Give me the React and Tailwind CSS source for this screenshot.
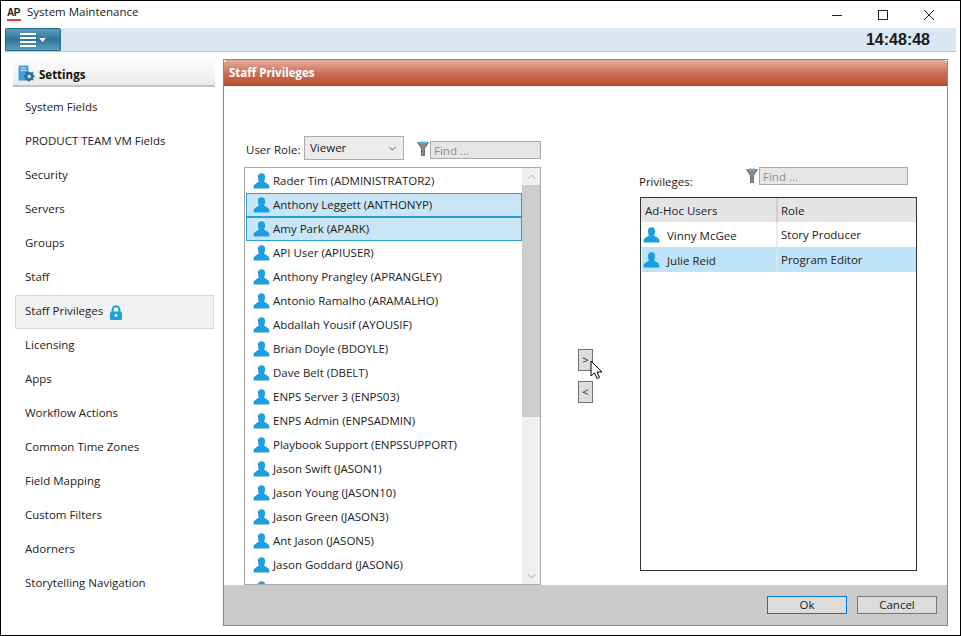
const FONT = "font-['Open_Sans','Noto_Sans',sans-serif]";

const SETTINGS_ITEMS = [
  'System Fields',
  'PRODUCT TEAM VM Fields',
  'Security',
  'Servers',
  'Groups',
  'Staff',
  'Staff Privileges',
  'Licensing',
  'Apps',
  'Workflow Actions',
  'Common Time Zones',
  'Field Mapping',
  'Custom Filters',
  'Adorners',
  'Storytelling Navigation',
];

const USERS = [
  'Rader Tim (ADMINISTRATOR2)',
  'Anthony Leggett (ANTHONYP)',
  'Amy Park (APARK)',
  'API User (APIUSER)',
  'Anthony Prangley (APRANGLEY)',
  'Antonio Ramalho (ARAMALHO)',
  'Abdallah Yousif (AYOUSIF)',
  'Brian Doyle (BDOYLE)',
  'Dave Belt (DBELT)',
  'ENPS Server 3 (ENPS03)',
  'ENPS Admin (ENPSADMIN)',
  'Playbook Support (ENPSSUPPORT)',
  'Jason Swift (JASON1)',
  'Jason Young (JASON10)',
  'Jason Green (JASON3)',
  'Ant Jason (JASON5)',
  'Jason Goddard (JASON6)',
  '',
];

function Person() {
  return (
    <svg width="17" height="16" viewBox="0 0 17 16" className="shrink-0">
      <ellipse cx="8.5" cy="4.6" rx="3.6" ry="4.4" fill="#1b9fe0" />
      <path d="M6.2 8 C5 9.8 1.2 10.2 0.6 13.4 L0.6 15.6 L16.4 15.6 L16.4 13.4 C15.8 10.2 12 9.8 10.8 8 Z" fill="#1b9fe0" />
    </svg>
  );
}

function Funnel() {
  return (
    <svg width="12" height="16" viewBox="0 0 12 16" className="shrink-0">
      <path d="M0.5 1.5 L11.5 1.5 L7.5 7.5 L7.5 14.5 L4.5 14.5 L4.5 7.5 Z" fill="#8a8a8a" stroke="#555" strokeWidth="0.8" />
      <path d="M0.8 1.5 C3 0 9 0 11.2 1.5 C9 3 3 3 0.8 1.5 Z" fill="#58b4e6" />
    </svg>
  );
}

function FindBox({ className }) {
  return (
    <div className={`h-[18px] bg-[#e6e6e6] border border-[#a8a8a8] px-[3px] text-[11.5px] leading-[17px] text-[#8f8f8f] ${className}`}>Find ...</div>
  );
}

function WindowTitle() {
  return (
    <div className="h-[27px] flex items-start shrink-0">
      <div className="w-[14px] ml-[6px] mt-[6px] flex flex-col gap-[1px]">
        <span className="font-['Liberation_Sans',sans-serif] font-bold text-[10px] leading-[11px] text-[#222] tracking-[-0.5px]">AP</span>
        <span className="h-[2px] bg-[#ee3a3a] w-[14px]"></span>
      </div>
      <span className="ml-[6px] mt-[3px] text-[11.5px] leading-[16px] text-[#1a1a1a]">System Maintenance</span>
      <div className="ml-auto mr-[8px] h-full flex items-center text-black">
        <svg width="46" height="16" viewBox="0 0 46 16"><path d="M18 8.5 H28" stroke="#222" strokeWidth="1" /></svg>
        <svg width="46" height="16" viewBox="0 0 46 16"><rect x="18.5" y="3.5" width="9" height="9" fill="none" stroke="#222" strokeWidth="1" /></svg>
        <svg width="46" height="16" viewBox="0 0 46 16"><path d="M18 3 L28 13 M28 3 L18 13" stroke="#222" strokeWidth="1" /></svg>
      </div>
    </div>
  );
}

function MenuBar() {
  return (
    <div className="h-[24px] shrink-0 flex items-stretch bg-[#dde7f3] border-b border-[#b7c8dc] ml-[4px] mr-[4px]">
      <div className="w-[56px] h-[23px] rounded-t-[2px] border border-[#1f6f93] bg-gradient-to-b from-[#5f9dbb] via-[#2c7699] to-[#5d9cb9] flex items-center justify-center gap-[3px]">
        <div className="flex flex-col gap-[2px]">
          <span className="block w-[16px] h-[2px] bg-white"></span>
          <span className="block w-[16px] h-[2px] bg-white"></span>
          <span className="block w-[16px] h-[2px] bg-white"></span>
          <span className="block w-[16px] h-[2px] bg-white"></span>
        </div>
        <svg width="7" height="4" viewBox="0 0 7 4"><path d="M0 0 H7 L3.5 4 Z" fill="#fff" /></svg>
      </div>
      <span className="ml-auto mr-[26px] font-['Liberation_Sans',sans-serif] font-bold text-[16px] leading-[24px] text-[#1a1a1a]">14:48:48</span>
    </div>
  );
}

function Sidebar() {
  return (
    <div className="w-[222px] shrink-0 pl-[12px] pt-[7px]">
      <div className="w-[202px] h-[28px] flex items-start border-b-2 border-[#c4c4bc] bg-gradient-to-b from-white to-[#e9e9e9]">
        <svg width="17" height="17" viewBox="0 0 17 17" className="ml-[5px] mt-[6px]">
          <rect x="0.5" y="0.5" width="10" height="15" rx="1" fill="#3f9fdc" />
          <path d="M2.5 3 H8.5 M2.5 5.5 H8.5" stroke="#d5ecfa" strokeWidth="1" />
          <path d="M11.5 6.8 L13 7.4 L14.4 6.8 L15.6 8 L15 9.4 L16.5 10.8 L16.5 12.2 L15 12.8 L15.6 14.4 L14.4 15.6 L13 15 L11.5 16.5 L10 16.5 L9.4 15 L8 15.6 L6.8 14.4 L7.4 12.8 L6 12.2 L6 10.8 L7.4 9.4 L6.8 8 L8 6.8 L9.4 7.4 L10 6.8 Z" fill="#2d6f9a" />
          <circle cx="11.2" cy="11.5" r="1.7" fill="#d8e8f2" />
        </svg>
        <span className="ml-[4px] mt-[7px] text-[11.5px] font-bold text-[#111]">Settings</span>
      </div>
      <div className="mt-[4px] w-[199px] ml-[2px]">
        {SETTINGS_ITEMS.map((item) => (
          <div
            key={item}
            className={`h-[34px] flex items-center pb-[2px] text-[11.5px] text-[#222] ${item === 'Staff Privileges' ? 'bg-[#f2f2f2] border border-[#d9d9d9] pl-[9px]' : 'pl-[10px]'}`}
          >
            {item}
            {item === 'Staff Privileges' && (
              <svg width="14" height="15" viewBox="0 0 14 15" className="ml-[6px] mt-[2px]">
                <path d="M3.6 7 V4.6 a3.4 3.4 0 0 1 6.8 0 V7" fill="none" stroke="#1b9fe0" strokeWidth="2" />
                <rect x="1" y="6.5" width="12" height="8.5" rx="1.5" fill="#1b9fe0" />
                <circle cx="7" cy="10.5" r="1.4" fill="#fff" />
              </svg>
            )}
          </div>
        ))}
      </div>
    </div>
  );
}

function UserList() {
  return (
    <div className="h-[418px] w-[297px] border border-[#a9a9a9] bg-white flex overflow-hidden">
      <div className="w-[277px] pl-px pt-[1px] overflow-hidden">
        {USERS.map((name, i) => {
          const selected = i === 1 || i === 2;
          return (
            <div
              key={i}
              className={`h-[24px] flex items-center text-[11.5px] text-[#222] ${selected ? 'bg-[#c8e6f5] border border-[#26a0da] pl-[6px]' : 'pl-[7px]'}`}
            >
              <Person />
              <span className="ml-[3px]">{name}</span>
            </div>
          );
        })}
      </div>
      <div className="w-[18px] bg-[#f0f0f0] flex flex-col">
        <div className="h-[17px] flex items-center justify-center">
          <svg width="9" height="6" viewBox="0 0 9 6"><path d="M0.5 5 L4.5 1 L8.5 5" fill="none" stroke="#b0b0b0" strokeWidth="1" /></svg>
        </div>
        <div className="h-[232px] bg-[#cdcdcd]"></div>
        <div className="flex-1"></div>
        <div className="h-[17px] flex items-center justify-center">
          <svg width="9" height="6" viewBox="0 0 9 6"><path d="M0.5 1 L4.5 5 L8.5 1" fill="none" stroke="#b0b0b0" strokeWidth="1" /></svg>
        </div>
      </div>
    </div>
  );
}

function PrivilegesTable() {
  return (
    <div className="h-[374px] w-[277px] border border-[#333] bg-white">
      <div className="h-[24px] flex bg-[#e5e5e5] text-[11.5px] text-[#222] leading-[25px]">
        <div className="w-[137px] pl-[4px] border-r-2 border-[#cfcfcf]">Ad-Hoc Users</div>
        <div className="pl-[3px]">Role</div>
      </div>
      <div className="h-[25px] flex items-center text-[11.5px] text-[#222]">
        <div className="w-[137px] flex items-center pl-[2px] border-r-2 border-[#ececec] h-full">
          <Person />
          <span className="ml-[7px] mt-[2px]">Vinny McGee</span>
        </div>
        <div className="pl-[3px] mt-px">Story Producer</div>
      </div>
      <div className="h-[25px] flex items-center text-[11.5px] text-[#222] bg-[#bfe3f8] ml-px">
        <div className="w-[136px] flex items-center pl-px border-r-2 border-[#d8e6ee] h-full">
          <Person />
          <span className="ml-[7px] mt-[2px]">Julie Reid</span>
        </div>
        <div className="pl-[3px] mt-px">Program Editor</div>
      </div>
    </div>
  );
}

function StaffPanel() {
  return (
    <div className="w-[725px] h-[567px] border border-[#8a8a8a] flex flex-col">
      <div className="h-[26px] shrink-0 rounded-t-[4px] bg-gradient-to-b from-[#e4ad9f] via-[#cb7258] to-[#b8482a] text-white font-bold text-[11.5px] leading-[26px] pl-[5px]">
        Staff Privileges
      </div>
      <div className="flex-1 flex min-h-0">
        <div className="w-[297px] ml-[20px] pt-[50px] flex flex-col">
          <div className="h-[24px] flex items-start mb-[7px]">
            <span className="w-[60px] mt-[5px] pl-[2px] text-[11.5px] text-[#222]">User Role:</span>
            <div className="w-[100px] h-[24px] border border-[#acacac] bg-[#ececec] flex items-center justify-between pl-[5px] pr-[7px] text-[11.5px] text-[#222]">
              <span className="-mt-[1px]">Viewer</span>
              <svg width="7" height="5" viewBox="0 0 7 5"><path d="M0.5 1 L3.5 4 L6.5 1" fill="none" stroke="#555" strokeWidth="1" /></svg>
            </div>
            <div className="ml-[13px] mr-[1px] mt-[5px]"><Funnel /></div>
            <FindBox className="w-[111px] mt-[5px]" />
          </div>
          <UserList />
        </div>
        <div className="w-[99px] flex flex-col items-start pl-[37px] pt-[263px] gap-[10px]">
          <button className="w-[15px] h-[22px] bg-[#dcdcdc] border border-[#707070] text-[11px] leading-[18px] text-[#222]">&gt;</button>
          <button className="w-[15px] h-[22px] bg-[#dcdcdc] border border-[#707070] text-[11px] leading-[18px] text-[#222]">&lt;</button>
        </div>
        <div className="w-[277px] pt-[81px] flex flex-col">
          <div className="h-[30px] relative">
            <span className="absolute left-[-1px] top-[6px] text-[11.5px] text-[#222]">Privileges:</span>
            <div className="flex items-start pl-[106px]">
              <div className="mr-[1px] mt-px"><Funnel /></div>
              <FindBox className="w-[149px]" />
            </div>
          </div>
          <PrivilegesTable />
        </div>
      </div>
      <div className="h-[40px] shrink-0 bg-[#cbcbcb] flex items-center justify-end gap-[10px] pr-[10px]">
        <button className="w-[80px] h-[18px] bg-[#dcdcdc] border border-[#0078d7] text-[11.5px] leading-[16px] text-[#222]">Ok</button>
        <button className="w-[80px] h-[18px] bg-[#dcdcdc] border border-[#777] text-[11.5px] leading-[16px] text-[#222]">Cancel</button>
      </div>
    </div>
  );
}

export default function App() {
  return (
    <div className={`relative w-[961px] h-[636px] bg-white overflow-hidden ${FONT}`}>
      <div className="w-[961px] h-[636px] border border-black flex flex-col">
        <WindowTitle />
        <MenuBar />
        <div className="flex-1 flex min-h-0">
          <Sidebar />
          <div className="pt-[7px]"><StaffPanel /></div>
        </div>
      </div>
      {/* mouse pointer over the > button */}
      <svg width="14" height="22" viewBox="0 0 14 22" className="absolute left-[590px] top-[360px]">
        <path d="M1 1 L1 16 L4.5 12.8 L7 18.5 L9.5 17.4 L7 12 L12 12 Z" fill="#fff" stroke="#000" strokeWidth="1" />
      </svg>
    </div>
  );
}
